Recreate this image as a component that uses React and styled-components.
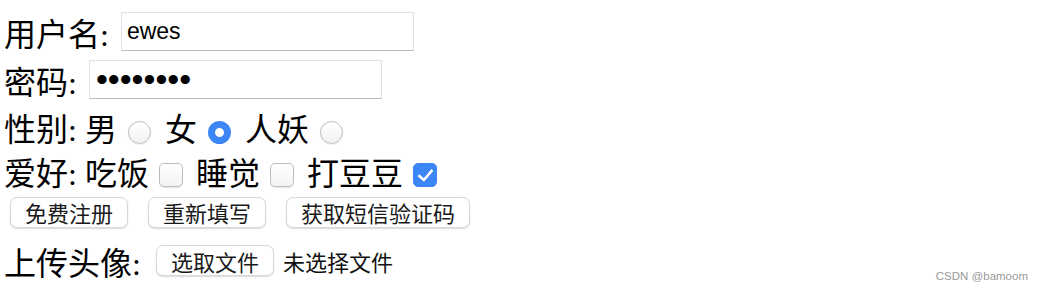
import React, { useState } from 'react'
import styled, { createGlobalStyle } from 'styled-components'

const GlobalStyle = createGlobalStyle`
  html, body {
    margin: 0;
    background: #fff;
  }
  body {
    font-family: "Liberation Serif", "Noto Sans CJK SC", serif;
    color: #000;
  }
`

const Page = styled.div`
  position: relative;
  width: 1042px;
  height: 290px;
  padding: 12px 0 0 4px;
  box-sizing: border-box;
  overflow: hidden;
`

// label + one control: flex row
const FieldRow = styled.div`
  display: flex;
  align-items: center;
  height: ${p => p.h || 39}px;
  margin-top: ${p => p.mt || 0}px;
  font-size: 32px;
  white-space: pre;
`

// label + several options: inline flow like the original html
const ChoiceRow = styled.div`
  height: 44px;
  line-height: 44px;
  margin-top: ${p => p.mt || 0}px;
  font-size: 32px;
  white-space: nowrap;
`

const TextInput = styled.input`
  box-sizing: border-box;
  width: 293px;
  height: 39px;
  margin: 0 0 0 4px;
  padding: 0 5px;
  border: 1px solid #e2e2e2;
  border-bottom-color: #bcbcbc;
  border-radius: 0;
  font-family: "Liberation Sans", Arial, sans-serif;
  font-size: 23px;
  color: #000;
  outline: none;
`

const PassInput = styled(TextInput).attrs({ type: 'password' })`
  font-size: 34px;
  letter-spacing: 0;
  padding-left: 6px;
`

const Radio = styled.input.attrs({ type: 'radio' })`
  appearance: none;
  display: inline-block;
  box-sizing: border-box;
  width: 23px;
  height: 23px;
  margin: 0 6px 0 3px;
  vertical-align: -3px;
  border-radius: 50%;
  border: 1px solid #bdbdbd;
  background: linear-gradient(#fff, #f2f2f2);
  box-shadow: 0 0.5px 1px rgba(0, 0, 0, 0.1);
  &:checked {
    border: 7.5px solid #3d86f5;
    background: #fff;
    box-shadow: none;
  }
`

const Check = styled.input.attrs({ type: 'checkbox' })`
  appearance: none;
  display: inline-block;
  position: relative;
  box-sizing: border-box;
  width: 24px;
  height: 24px;
  margin: 0 5px 0 2px;
  vertical-align: -2px;
  border-radius: 5px;
  border: 1px solid #bdbdbd;
  background: linear-gradient(#fff, #f4f4f4);
  box-shadow: 0 0.5px 1px rgba(0, 0, 0, 0.1);
  &:checked {
    border-color: #3d86f5;
    background: #3d86f5;
    box-shadow: none;
  }
  &:checked::after {
    content: '';
    position: absolute;
    left: 7px;
    top: 2px;
    width: 6px;
    height: 12px;
    border: solid #fff;
    border-width: 0 3.5px 3.5px 0;
    border-radius: 1px;
    transform: rotate(40deg);
  }
`

const ButtonRow = styled.div`
  display: flex;
  align-items: center;
  gap: 20px;
  height: 32px;
  padding-left: 6px;
`

const Btn = styled.button`
  box-sizing: border-box;
  height: 31px;
  padding: 0 14px;
  margin: ${p => p.m || 0};
  border: 1px solid #d8d8d8;
  border-radius: 7px;
  background: #fff;
  box-shadow: 0 1px 1.5px rgba(0, 0, 0, 0.15);
  font-family: "Noto Sans CJK SC", "Liberation Sans", sans-serif;
  font-size: 22px;
  line-height: 1;
  color: #1a1a1a;
  cursor: pointer;
`

const FileNote = styled.span`
  margin-left: 9px;
  font-family: "Noto Sans CJK SC", "Liberation Sans", sans-serif;
  font-size: 22px;
  color: #111;
`

const Watermark = styled.div`
  position: absolute;
  right: 14px;
  bottom: 8px;
  font-family: "Liberation Sans", Arial, sans-serif;
  font-size: 11.5px;
  color: #9a9a9a;
`

export default function App() {
  const [name, setName] = useState('ewes')
  const [pass, setPass] = useState('12345678')
  const [sex, setSex] = useState('female')
  const [hobby, setHobby] = useState({ eat: false, sleep: false, beat: true })

  const toggle = key => setHobby({ ...hobby, [key]: !hobby[key] })

  return (
    <Page>
      <GlobalStyle />
      <FieldRow>
        用户名: <TextInput value={name} onChange={e => setName(e.target.value)} />
      </FieldRow>
      <FieldRow mt={9}>
        密码: <PassInput value={pass} onChange={e => setPass(e.target.value)} />
      </FieldRow>
      <ChoiceRow mt={9}>
        性别: 男 <Radio name="sex" checked={sex === 'male'} onChange={() => setSex('male')} />
        {' '}女 <Radio name="sex" checked={sex === 'female'} onChange={() => setSex('female')} />
        {' '}人妖 <Radio name="sex" checked={sex === 'other'} onChange={() => setSex('other')} />
      </ChoiceRow>
      <ChoiceRow>
        爱好: 吃饭 <Check checked={hobby.eat} onChange={() => toggle('eat')} />
        {' '}睡觉 <Check checked={hobby.sleep} onChange={() => toggle('sleep')} />
        {' '}打豆豆 <Check checked={hobby.beat} onChange={() => toggle('beat')} />
      </ChoiceRow>
      <ButtonRow>
        <Btn>免费注册</Btn>
        <Btn>重新填写</Btn>
        <Btn>获取短信验证码</Btn>
      </ButtonRow>
      <FieldRow h={41} mt={12}>
        上传头像: <Btn m="0 0 0 7px">选取文件</Btn>
        <FileNote>未选择文件</FileNote>
      </FieldRow>
      <Watermark>CSDN @bamoom</Watermark>
    </Page>
  )
}
